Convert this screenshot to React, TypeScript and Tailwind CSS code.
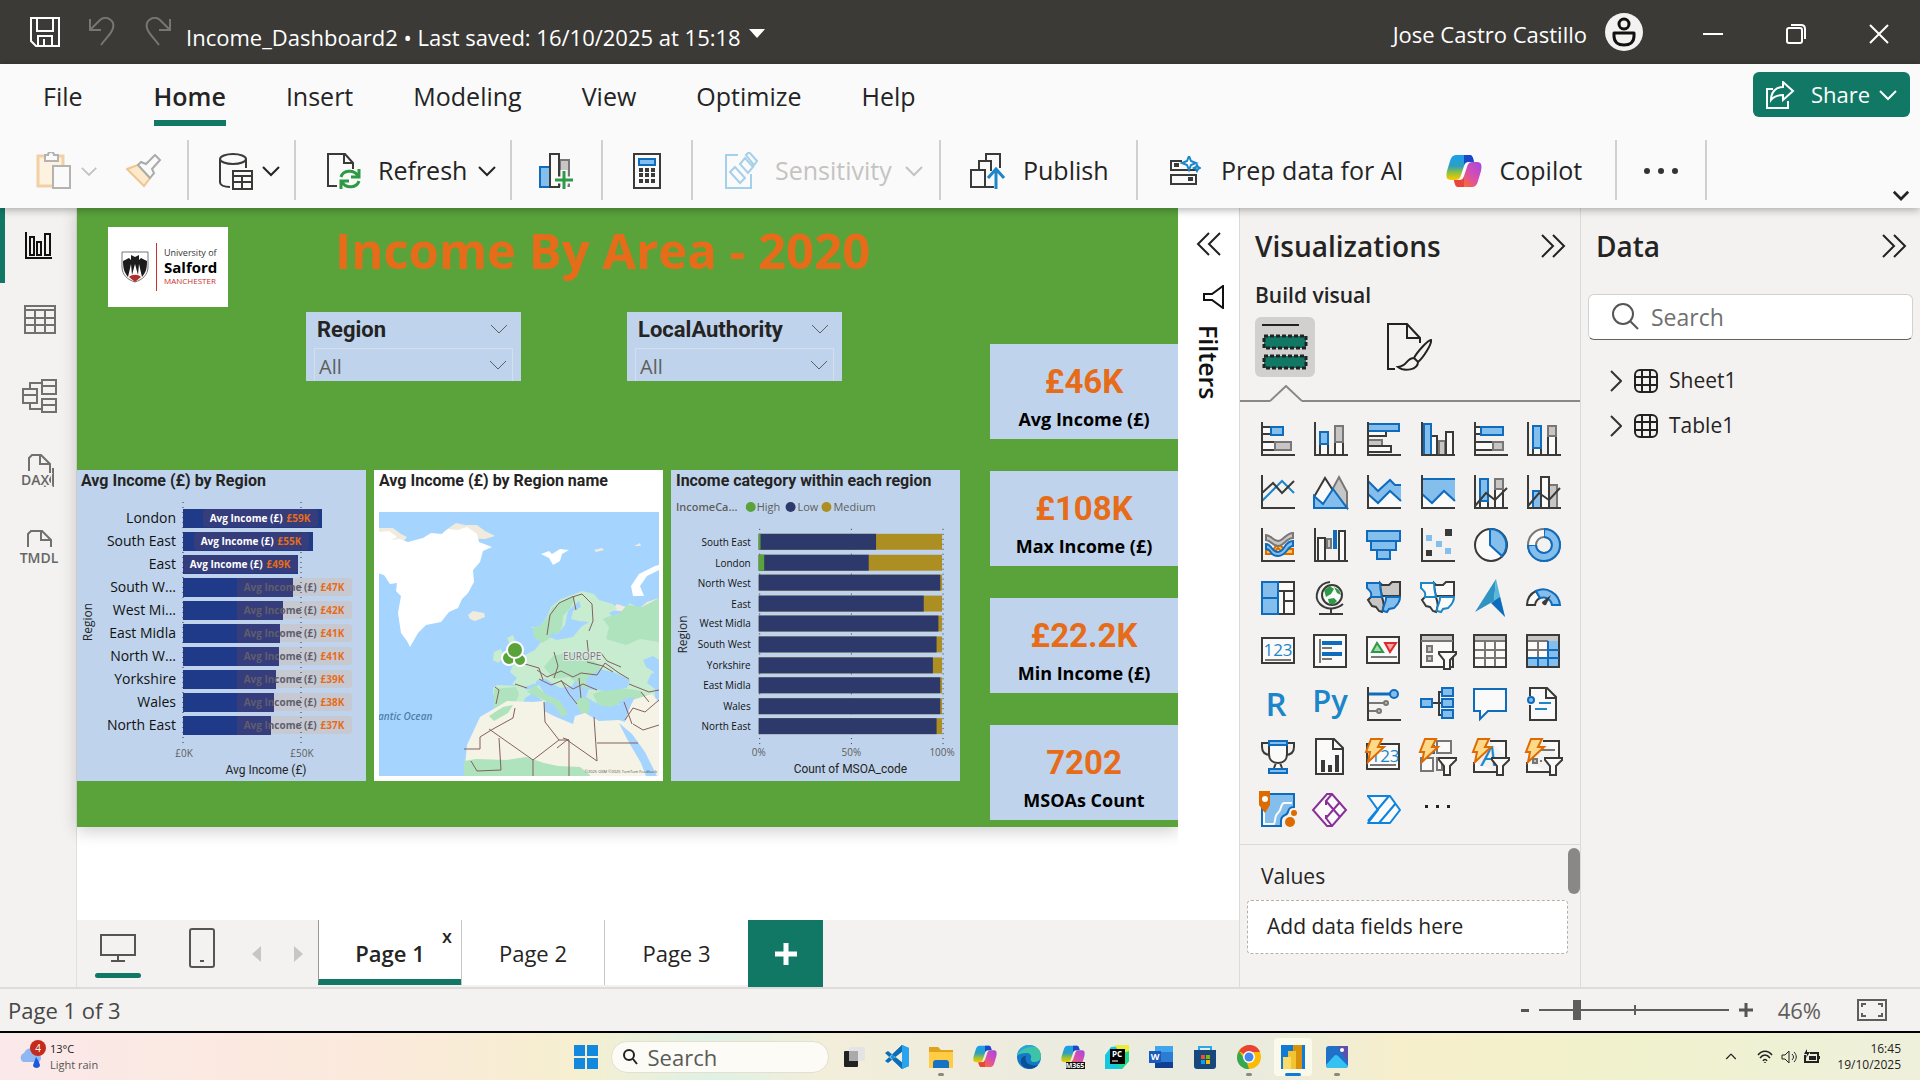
import React from "react";

const B = "#83beec";
const BS = "#0f6cbd";
const D = "#3a3a38";
const G = "#c8c6c4";
const GS = "#797775";
const W = "#fafafa";

type BoxProps = { x: number; y: number; w: number; h: number; f: string; s: string };
const Box = ({ x, y, w, h, f, s }: BoxProps) => (
  <rect x={x} y={y} width={w} height={h} fill={f} stroke={s} strokeWidth="2" />
);
const Axis = () => <path d="M1 0V33H34" fill="none" stroke={D} strokeWidth="2" />;
const Funnel = () => (
  <path d="M18 18h17v2l-6 6v9h-6v-9l-5-6z" fill={W} stroke={D} strokeWidth="2" />
);
const Bolt = () => (
  <path d="M4 -1h11l-4 8h6L1 22l2-10h-4z" fill="#ffd98a" stroke="#dd6b00" strokeWidth="2" />
);
const Line = ({ d, c = D, w = 2, f = "none" }: { d: string; c?: string; w?: number; f?: string }) => (
  <path d={d} fill={f} stroke={c} strokeWidth={w} />
);
const US_A = "M0 2h13c0 7 1 10 2 14H4c1-5-1-6-4-9z";
const US_B = "M13 2l2 2h7l3-3h8v14H15c-1-4-2-7-2-13z";
const US_C = "M4 16h11c1 5 3 6 1 12l-1 3-3-1-3-4-4-1-4-6z";
const US_D = "M19 16h14c0 6-3 8-6 11l-5 1-2 3-4-1c-1-5 4-8 3-14z";

const visuals: { name: string; art: React.ReactNode }[] = [
  { name: "Stacked bar chart", art: <><Box x={1} y={5} w={9} h={7} f={W} s={D} /><Box x={1} y={20} w={13} h={8} f={W} s={D} /><Box x={14} y={20} w={16} h={8} f={G} s={GS} /><Box x={10} y={5} w={12} h={8} f={B} s={BS} /><Axis /></> },
  { name: "Stacked column chart", art: <><Box x={6} y={22} w={8} h={11} f={W} s={D} /><Box x={21} y={20} w={8} h={13} f={W} s={D} /><Box x={21} y={4} w={8} h={16} f={G} s={GS} /><Box x={6} y={10} w={8} h={12} f={B} s={BS} /><Axis /></> },
  { name: "Clustered bar chart", art: <><Box x={1} y={9} w={18} h={5} f={W} s={D} /><Box x={1} y={18} w={14} h={6} f={G} s={GS} /><Box x={1} y={24} w={23} h={6} f={W} s={D} /><Box x={1} y={2} w={31} h={7} f={B} s={BS} /><Axis /></> },
  { name: "Clustered column chart", art: <><Box x={10} y={14} w={6} h={19} f={W} s={D} /><Box x={18} y={19} w={6} h={14} f={G} s={GS} /><Box x={25} y={10} w={7} h={23} f={W} s={D} /><Box x={3} y={2} w={7} h={31} f={B} s={BS} /><Axis /></> },
  { name: "100% stacked bar chart", art: <><Box x={1} y={5} w={6} h={7} f={W} s={D} /><Box x={1} y={20} w={18} h={8} f={W} s={D} /><Box x={19} y={20} w={10} h={8} f={G} s={GS} /><Box x={7} y={5} w={22} h={8} f={B} s={BS} /><Axis /></> },
  { name: "100% stacked column chart", art: <><Box x={6} y={26} w={8} h={7} f={W} s={D} /><Box x={21} y={14} w={8} h={19} f={W} s={D} /><Box x={21} y={4} w={8} h={10} f={G} s={GS} /><Box x={6} y={4} w={8} h={22} f={B} s={BS} /><Axis /></> },
  { name: "Line chart", art: <><Line d="M1 26L21 6l12 12" c="#1b86c9" /><Line d="M1 18L12 8l9 10L33 6" /><Axis /></> },
  { name: "Area chart", art: <><Line d="M17 17l8-15 8 15v16z" c={GS} f={G} /><Line d="M0 22L11 3l9 14-9 14z" f={W} /><Line d="M0 21l9 8 10-15 14 19H0z" c={BS} f={B} /></> },
  { name: "Stacked area chart", art: <><path d="M1 19l10 9 12-12 11 10v7H1z" fill={W} /><path d="M1 6l10 10L23 5l5 5h6v16L23 16 11 28 1 19z" fill={B} /><Line d="M1 6l10 10L23 5l5 5h6M1 19l10 9 12-12 11 10" c={BS} /><Axis /></> },
  { name: "100% stacked area chart", art: <><path d="M1 19l10 9 12-12 11 10v7H1z" fill={W} /><path d="M1 4h33v22L23 16 11 28 1 19z" fill={B} /><Line d="M1 4h33M1 19l10 9 12-12 11 10" c={BS} /><Axis /></> },
  { name: "Line and stacked column chart", art: <><Box x={6} y={26} w={8} h={7} f={W} s={D} /><Box x={21} y={14} w={8} h={19} f={W} s={D} /><Box x={21} y={4} w={8} h={10} f={G} s={GS} /><Box x={6} y={4} w={8} h={22} f={B} s={BS} /><Line d="M1 31l11-13 9 7 12-12" /><Axis /></> },
  { name: "Line and clustered column chart", art: <><Box x={6} y={16} w={8} h={17} f={B} s={BS} /><Box x={22} y={10} w={8} h={23} f={G} s={GS} /><Box x={14} y={2} w={8} h={31} f={W} s={D} /><Line d="M1 31l11-13 10 7 11-12" /><Axis /></> },
  { name: "Ribbon chart", art: <><path d="M5 22h7l5-7 6 6 9 0v5h-9l-6-6-5 6H5z" fill="#ffc55c" stroke="#dd6b00" strokeWidth="2" /><path d="M5 7c5 0 7 6 12 6s8-8 15-8v5c-7 0-9 8-15 8S10 12 5 12z" fill={G} stroke={GS} strokeWidth="2" /><path d="M5 16c6 0 5 8 12 8s6-11 15-11v5c-6 0-6 10-15 10S11 21 5 21z" fill={B} stroke={BS} strokeWidth="2" /><Axis /></> },
  { name: "Waterfall chart", art: <><Box x={4} y={10} w={7} h={23} f={W} s={D} /><Box x={13} y={11} w={4} h={9} f={G} s={GS} /><Box x={25} y={3} w={6} h={30} f={W} s={D} /><rect x="19" y="2" width="4" height="19" fill={BS} /><Axis /></> },
  { name: "Funnel", art: <><Box x={0} y={3} w={33} h={10} f={B} s={BS} /><Box x={4} y={13} w={25} h={9} f={B} s={BS} /><Box x={10} y={22} w={13} h={9} f={B} s={BS} /></> },
  { name: "Scatter chart", art: <><rect x="24" y="1" width="7" height="7" fill={D} /><rect x="5" y="7" width="6" height="6" fill={B} /><rect x="15" y="13" width="6" height="6" fill={B} /><rect x="5" y="22" width="6" height="6" fill={D} /><rect x="24" y="20" width="6" height="6" fill={B} /><Axis /></> },
  { name: "Pie chart", art: <><circle cx="17" cy="17" r="16" fill={W} stroke={D} strokeWidth="2" /><Line d="M16 1a16 16 0 0 1 12 27L16 17z" c={BS} f={B} /></> },
  { name: "Donut chart", art: <><circle cx="17" cy="17" r="12" fill="none" stroke={GS} strokeWidth="10" /><circle cx="17" cy="17" r="12" fill="none" stroke={W} strokeWidth="6" /><path d="M17 5a12 12 0 1 1-12 12" fill="none" stroke={BS} strokeWidth="10" /><path d="M18 5a12 12 0 1 1-13 13" fill="none" stroke={B} strokeWidth="6" /></> },
  { name: "Treemap", art: <><Box x={17} y={1} w={16} h={32} f={W} s={D} /><Line d="M17 10h16M23 10v23M23 20h10" /><Box x={1} y={1} w={16} h={32} f={B} s={BS} /><Line d="M1 17h16" c={BS} /></> },
  { name: "Map", art: <><path d="M16 1C4 2-1 16 6 23c7 7 17 5 23 0M5 33h24M17 28v5" fill="none" stroke={D} strokeWidth="2" /><circle cx="18" cy="14" r="10" fill={W} stroke={D} strokeWidth="2" /><path d="M10 9l6-4 4 3-3 5-5 3zM20 6l5 3 2 5-4-2zM14 18l6-1 3 3-4 4-4-2z" fill="#2f9a45" /></> },
  { name: "Filled map", art: <><Line d={US_C} f={G} /><Line d={US_B} f={G} /><Line d={US_A} c={BS} f={B} /><Line d={US_D} c={BS} f={B} /></> },
  { name: "Shape map", art: <><Line d={US_C} f={W} /><Line d={US_B} f={W} /><Line d={US_A} c="#1b86c9" f={W} /><Line d={US_D} c="#1b86c9" f={W} /></> },
  { name: "Azure map", art: <><path d="M22-2L1 31l19-11z" fill="#2f93c4" /><path d="M22-2l9 38-11-16z" fill="#57b7dc" /><path d="M20 20l-3 2 14 14-5-20z" fill="#0f6cbd" /></> },
  { name: "Gauge", art: <><path d="M0 24a16 16 0 0 1 9-14l4 7a9 9 0 0 0-5 7z" fill={W} stroke={D} strokeWidth="2" /><path d="M9 10a17 17 0 0 1 24 14h-8a9 9 0 0 0-12-7z" fill={B} stroke={BS} strokeWidth="2" /><path d="M24 14l-5 10a3 3 0 0 1-4-3z" fill={D} /></> },
  { name: "Card", art: <><Box x={1} y={4} w={32} h={25} f={W} s={D} /><text x="17" y="22" textAnchor="middle" fontSize="17" fill="#1b86c9">123</text><Line d="M4 26h26" c={GS} /></> },
  { name: "Multi-row card", art: <><Box x={0} y={1} w={32} h={32} f={W} s={D} /><Line d="M6 5v24M8 14h10M8 25h10" c={GS} /><Line d="M8 9h20M8 20h20" c="#0f6cbd" w={4} /></> },
  { name: "KPI", art: <><Box x={0} y={3} w={32} h={26} f={W} s={D} /><Line d="M5 18l5-9 6 9z" c="#2f9a45" f="#9fdcae" /><Line d="M18 9h11l-6 9z" c="#d92c2c" f="#ffa3a3" /><Line d="M4 23h26" c={GS} /></> },
  { name: "Slicer", art: <><Box x={0} y={1} w={32} h={32} f={W} s={D} /><rect x="1" y="2" width="30" height="5" fill={G} /><Line d="M0 7h32" c={GS} /><Box x={6} y={12} w={5} h={6} f={G} s={GS} /><Box x={6} y={22} w={5} h={5} f={G} s={GS} /><Funnel /></> },
  { name: "Table", art: <><Box x={0} y={1} w={32} h={32} f={W} s={D} /><rect x="1" y="2" width="30" height="5" fill={G} /><Line d="M1 7h30M1 16h30M1 24h30M11 7v25M21 7v25" c={GS} /></> },
  { name: "Matrix", art: <><Box x={0} y={1} w={32} h={32} f={W} s={D} /><rect x="1" y="2" width="30" height="5" fill={G} /><path d="M21 7h10v25H1v-8h20z" fill={B} /><Line d="M1 7h20M1 16h20M11 7v17" c={GS} /><Line d="M21 7v25M1 24h31M21 16h11M11 24v8" c={BS} /></> },
  { name: "R script visual", art: <text x="15" y="29" textAnchor="middle" fontSize="33" fontWeight="600" fill="#1b86c9">R</text> },
  { name: "Python visual", art: <text x="16" y="25" textAnchor="middle" fontSize="31" fontWeight="600" fill="#1b86c9">Py</text> },
  { name: "Key influencers", art: <><Line d="M1 7h24" c="#0f6cbd" w={3} /><Line d="M1 16h17M1 24h10" c={GS} /><circle cx="27" cy="7" r="4" fill={B} stroke={BS} strokeWidth="2" /><circle cx="19" cy="16" r="2" fill={G} stroke={GS} strokeWidth="2" /><circle cx="12" cy="24" r="2" fill={G} stroke={GS} strokeWidth="2" /><Axis /></> },
  { name: "Decomposition tree", art: <><Line d="M11 16h10M22 5h-4v23h4" /><Box x={0} y={12} w={11} h={8} f={B} s={BS} /><Box x={21} y={1} w={11} h={8} f={B} s={BS} /><Box x={21} y={12} w={11} h={8} f={B} s={BS} /><Box x={21} y={23} w={11} h={8} f={B} s={BS} /></> },
  { name: "Q&A", art: <Line d="M0 2h32v22H14l-8 8v-8H0z" c={BS} f={W} /> },
  { name: "Narrative", art: <><Line d="M3 9V1h17l9 9v23H3V18" f={W} /><Line d="M19 1v10h10" /><circle cx="4" cy="13" r="3" fill={B} stroke={BS} strokeWidth="2" /><Line d="M12 16h12M8 22h12" c="#1b86c9" /></> },
  { name: "Metrics", art: <><path d="M8 3H1v4c0 5 3 8 9 8M26 3h7v4c0 5-3 8-9 8" fill="none" stroke={D} strokeWidth="2" /><path d="M8 2h18v12c0 6-4 9-9 9s-9-3-9-9zM13 28l2-5h4l2 5" fill={W} stroke={D} strokeWidth="2" /><Box x={8} y={1} w={18} h={4} f={B} s={BS} /><Box x={8} y={29} w={18} h={4} f={B} s={BS} /></> },
  { name: "Paginated report", art: <><Line d="M2-1h18l9 9v26H2z" f={W} /><Line d="M19-1v10h10" /><path d="M7 20h4v12H7zM14 25h4v7h-4zM21 15h4v17h-4z" fill={D} /></> },
  { name: "Card (new)", art: <><Box x={0} y={4} w={32} h={25} f={W} s={D} /><text x="18" y="22" textAnchor="middle" fontSize="17" fill="#1b86c9">123</text><Line d="M3 25h26" c={GS} /><Bolt /></> },
  { name: "Button slicer", art: <><Box x={0} y={18} w={12} h={13} f={W} s={GS} /><Box x={16} y={1} w={14} h={12} f={W} s={GS} /><Line d="M16 18h5v12h-5z" c={GS} f={W} /><rect x="6" y="5" width="8" height="9" fill="#0f6cbd" /><Funnel /><Bolt /></> },
  { name: "Text slicer", art: <><Line d="M16 1h16v16M0 22v10h22" f={W} /><text x="15" y="26" textAnchor="middle" fontSize="27" fontStyle="italic" fill="#1b86c9">A</text><Funnel /><Bolt /></> },
  { name: "List slicer", art: <><Line d="M16 1h16v16M0 22v10h22" f={W} /><Box x={6} y={19} w={4} h={4} f={G} s={GS} /><Line d="M14 10h14M13 21h2" c={GS} /><Funnel /><Bolt /></> },
  { name: "ArcGIS map", art: <><path d="M1 1h32v13c-8 0-4 7-9 8-5 2-4 6-4 11H1z" fill={B} stroke={BS} strokeWidth="2" /><path d="M3 20h10V9h7" fill={B} /><path d="M3 18v13h10c2-4 0-8 4-11s2-9 6-10h8" fill="none" stroke={W} strokeWidth="2" /><path d="M-2-2H9v14L4 20-2 12z" fill="#dd6b00" /><circle cx="4" cy="6" r="3" fill={W} /><circle cx="29" cy="29" r="5" fill="#dd6b00" /><circle cx="33" cy="20" r="3" fill="#dd6b00" /></> },
  { name: "Power Apps", art: <><path d="M13 1h5l14 16-14 16h-5L-1 17z" fill={W} stroke="#8a2f99" strokeWidth="2" /><path d="M18 1l-6 7 14 16M26 9L12 25l6 8M12 8v4M12 22v4" fill="none" stroke="#8a2f99" strokeWidth="2" /></> },
  { name: "Power Automate", art: <path d="M1 3h22l10 14-10 13H1l10-13zM22 3L1 28M29 10L12 30M7 3L0 3" fill={W} stroke="#0a84e0" strokeWidth="2" strokeLinejoin="round" /> },
  { name: "More visuals", art: <path d="M4 12h3v3H4zM15 12h3v3h-3zM26 12h3v3h-3z" fill="#222" /> },
];

const Chevron = ({ className = "", w = 2 }: { className?: string; w?: number }) => (
  <svg viewBox="0 0 20 12" className={className} fill="none" stroke="currentColor" strokeWidth={w} aria-hidden="true">
    <path d="M2 2l8 8 8-8" />
  </svg>
);
const DoubleChevron = ({ left = false }: { left?: boolean }) => (
  <svg viewBox="0 0 26 26" className="size-[26px]" fill="none" stroke="#222" strokeWidth="2" aria-hidden="true">
    <path d={left ? "M13 2L2 13l11 11M24 2L13 13l11 11" : "M2 2l11 11L2 24M13 2l11 11-11 11"} />
  </svg>
);

const CopilotMark = ({ className }: { className: string }) => (
  <svg viewBox="0 0 36 34" className={className} aria-hidden="true">
    <defs>
      <linearGradient id="cpA" x1="0" y1="0" x2="0" y2="1">
        <stop offset="0" stopColor="#1aa0f0" /><stop offset=".45" stopColor="#2f9ec0" /><stop offset=".7" stopColor="#8fc23c" /><stop offset="1" stopColor="#ffc800" />
      </linearGradient>
      <linearGradient id="cpB" x1="1" y1="0" x2="0" y2="1">
        <stop offset="0" stopColor="#a348e0" /><stop offset=".45" stopColor="#d94fae" /><stop offset=".75" stopColor="#f5654a" /><stop offset="1" stopColor="#ff9d3c" />
      </linearGradient>
    </defs>
    <path d="M18 1h6c2 0 3 2 4 7h-6c-2 0-3 1-4 4l-3 9c-1 4-3 5-6 5H5c-5 0-5-4-4-9l3-10c1-4 3-6 6-6z" fill="url(#cpA)" />
    <path d="M18 1h6c2 0 3 2 4 7h-6c-2 0-3 1-4 3z" fill="#1a48c8" />
    <path d="M18 33h-6c-2 0-3-2-4-7h6c2 0 3-1 4-4l3-9c1-4 3-5 6-5h4c5 0 5 4 4 9l-3 10c-1 4-3 6-6 6z" fill="url(#cpB)" />
    <path d="M18 33h-6c-2 0-3-2-4-7h6c2 0 3-1 4-3z" fill="#e8453c" />
  </svg>
);

const tabs = ["File", "Home", "Insert", "Modeling", "View", "Optimize", "Help"];

const TitleBar = () => (
  <header className="flex h-16 items-center bg-[#3b3a37] text-white">
    <button aria-label="Save" className="ml-[30px]">
      <svg viewBox="0 0 30 30" className="size-[30px]" fill="none" stroke="#fff" strokeWidth="2"><path d="M1 1h28v28H6l-5-5zM7 1v13h16V1M8 29V19h14v10M14 22v7" /></svg>
    </button>
    <button aria-label="Undo" className="ml-7">
      <svg viewBox="0 0 28 30" className="h-[30px] w-7" fill="none" stroke="#777673" strokeWidth="2"><path d="M2 2v11h11M2 13L12 3c6-5 15 0 13 8-1 5-6 9-12 17" /></svg>
    </button>
    <button aria-label="Redo" className="ml-7">
      <svg viewBox="0 0 28 30" className="h-[30px] w-7" fill="none" stroke="#777673" strokeWidth="2"><path d="M26 2v11H15M26 13L16 3C10-2 1 3 3 11c1 5 6 9 12 17" /></svg>
    </button>
    <button className="ml-[14px] flex items-center pt-2.5 text-[22px] whitespace-nowrap">
      Income_Dashboard2 • Last saved: 16/10/2025 at 15:18
      <svg viewBox="0 0 16 9" className="mb-2 ml-2 h-[9px] w-4" aria-hidden="true"><path d="M0 0h16l-8 9z" fill="#fff" /></svg>
    </button>
    <div className="ml-auto flex items-center">
      <span className="pt-1 text-[22px]">Jose Castro Castillo</span>
      <svg viewBox="0 0 38 38" className="ml-[18px] size-[38px]" aria-hidden="true">
        <circle cx="19" cy="19" r="19" fill="#f3f2f1" />
        <g fill="none" stroke="#111" strokeWidth="3"><circle cx="19" cy="11" r="5" /><path d="M9 20h20v3c0 6-4 9-10 9s-10-3-10-9z" strokeLinejoin="round" /></g>
      </svg>
      <button aria-label="Minimize" className="ml-[60px]"><svg viewBox="0 0 20 20" className="size-5" stroke="#fff" strokeWidth="2"><path d="M0 12h20" /></svg></button>
      <button aria-label="Restore" className="mt-1 ml-[63px]"><svg viewBox="0 0 20 20" className="size-5" fill="none" stroke="#fff" strokeWidth="2"><rect x="1" y="4" width="15" height="15" rx="2" /><path d="M5 1h10q4 0 4 4v10" /></svg></button>
      <button aria-label="Close" className="mt-1 mr-[31px] ml-[63px]"><svg viewBox="0 0 20 20" className="size-5" stroke="#fff" strokeWidth="2"><path d="M1 1l18 18M19 1L1 19" /></svg></button>
    </div>
  </header>
);

const Group = ({ className, children }: { className: string; children: React.ReactNode }) => (
  <div className={"flex h-[60px] shrink-0 items-center border-r-2 border-[#d2d0ce] pt-0.5 " + className}>{children}</div>
);

const Ribbon = () => (
  <div className="relative z-10 bg-[#fafafa] text-[#242424] shadow-[0_2px_8px_rgba(0,0,0,0.3)]">
    <div className="flex h-[76px] items-start pr-2.5 pl-[43px]">
      <nav className="flex gap-[60px] pt-3 text-[25px]">
        {tabs.map((t) => (
          <button key={t} className={"border-b-6 pt-[2px] pb-1 first:mr-[11px] " + (t === "Home" ? "border-[#117865] font-semibold" : "border-transparent")}>{t}</button>
        ))}
      </nav>
      <button className="mt-2 ml-auto flex h-[45px] w-[157px] items-center gap-4 rounded-md bg-[#117865] px-3 text-[22px] text-white">
        <svg viewBox="0 0 30 28" className="h-7 w-[30px] shrink-0" fill="none" stroke="#fff" strokeWidth="2" aria-hidden="true"><path d="M8 8H2v19h21v-7M18 1l10 9-10 9v-5c-6 0-9 1-12 5 0-8 5-13 12-13z" /></svg>
        <span>Share</span>
        <Chevron className="-ml-2 w-5 shrink-0" />
      </button>
    </div>
    <div className="flex h-[68px] items-start text-[25px]">
      <Group className="w-[189px] pl-9">
        <button aria-label="Paste" className="flex items-center gap-2 text-[#c5c3c1]">
          <svg viewBox="0 0 36 38" className="h-[38px] w-9" strokeWidth="2"><path d="M2 4h25v30H2z" fill="#fdf1df" stroke="#f3cfa6" strokeWidth="3" /><path d="M9 3h3c0-4 6-4 6 0h4v6H9z" fill={W} stroke="#b5b3b1" /><path d="M17 14h17v22H17z" fill={W} stroke="#b5b3b1" /></svg>
          <Chevron className="w-[18px]" />
        </button>
        <button aria-label="Format painter" className="ml-7">
          <svg viewBox="0 0 36 34" className="h-[34px] w-9" strokeWidth="2"><path d="M1 15l11-4 12 13-6 8z" fill="#fdeacb" stroke="#f0c592" /><path d="M12 11l3-3 5 2 9-9 5 5-8 9 2 4-4 5z" fill={W} stroke="#aaa" /></svg>
        </button>
      </Group>
      <Group className="w-[107px] pl-[30px]">
        <button aria-label="Get data" className="flex items-center gap-2">
          <svg viewBox="0 0 34 37" className="h-[37px] w-[34px]" fill="none" stroke={D} strokeWidth="2"><ellipse cx="14" cy="6" rx="13" ry="5" /><path d="M1 6v23c0 3 4 5 10 5M27 6v9M14 18h19v18H14zM14 23h19M23 23v13M14 29h19" /></svg>
          <Chevron className="w-5" />
        </button>
      </Group>
      <Group className="w-[216px] pl-[30px]">
        <button className="flex items-center">
          <svg viewBox="0 0 36 38" className="mr-4 h-[38px] w-9" fill="none" stroke={D} strokeWidth="2" aria-hidden="true"><path d="M11 34H2V2h17l8 9v6M18 2v9h9" /><g stroke="#2f9a45" strokeWidth="3"><path d="M15 25c2-7 13-8 17-1M33 17v8h-8M33 29c-2 7-13 8-17 1M15 37v-8h8" /></g></svg>
          Refresh
          <Chevron className="ml-2.5 w-5" />
        </button>
      </Group>
      <Group className="w-[91px] justify-center">
        <button aria-label="New visual">
          <svg viewBox="0 0 36 38" className="h-[38px] w-9" strokeWidth="2"><path d="M1 15h10v20H1z" fill={B} stroke="#0f6cbd" /><path d="M21 8h9v26h-9z" fill={G} stroke={GS} /><path d="M11 2h9v33h-9z" fill={W} stroke={D} /><path d="M15 28h20M25 18v20" stroke={W} strokeWidth="7" /><path d="M16 28h18M25 19v18" stroke="#2f9a45" strokeWidth="3" /></svg>
        </button>
      </Group>
      <Group className="w-[90px] justify-center">
        <button aria-label="New measure">
          <svg viewBox="0 0 28 36" className="h-9 w-7"><path d="M1 1h26v34H1z" fill={W} stroke={D} strokeWidth="2" /><path d="M6 6h16v6H6z" fill={B} stroke="#0f6cbd" strokeWidth="2" /><path d="M6 15h4v4H6zM12 15h4v4h-4zM18 15h4v4h-4zM6 20h4v4H6zM12 20h4v4h-4zM18 20h4v4h-4zM6 26h4v4H6zM12 26h4v4h-4zM18 26h4v4h-4z" fill={D} /></svg>
        </button>
      </Group>
      <Group className="w-[248px] pl-[31px]">
        <button disabled className="flex items-center text-[#c5c3c1]">
          <svg viewBox="0 0 34 38" className="mr-[17px] h-[38px] w-[34px]" fill="none" stroke="#a5d0ea" strokeWidth="2" aria-hidden="true"><path d="M14 3H2v33h25V22M6 20l5-5 10 11-5 5zM16 12l5-6 8 9-5 6zM22 3l3-3 8 9-3 4z" /></svg>
          Sensitivity
          <Chevron className="ml-3 w-5" />
        </button>
      </Group>
      <Group className="w-[197px] pl-[29px]">
        <button className="flex items-center">
          <svg viewBox="0 0 36 38" className="mr-[17px] h-[38px] w-9" fill="none" stroke={D} strokeWidth="2" aria-hidden="true"><path d="M1 18h14v17H1zM9 18V9h12v10M16 9V2h14v14M15 35h9" /><path d="M26 37V17M18 26l8-9 8 9" stroke="#1b86c9" strokeWidth="3" /></svg>
          Publish
        </button>
      </Group>
      <Group className="w-[479px] pl-[31px]">
        <button className="flex items-center">
          <svg viewBox="0 0 32 30" className="mr-5 h-[30px] w-8" fill="none" stroke={D} strokeWidth="2" aria-hidden="true"><path d="M13 5H2v9h25M2 19h25v9H2zM27 14v-3" /><path d="M5 7h5v4H5zM19 21h5v4h-5z" fill={D} stroke="none" /><path d="M20 0l2 5 5 2-5 2-2 5-2-5-5-2 5-2zM28 9l1 2 2 1-2 1-1 2-1-2-2-1 2-1z" fill={W} stroke="#1b86c9" /></svg>
          Prep data for AI
        </button>
        <button className="ml-[42px] flex items-center">
          <CopilotMark className="mr-[18px] w-9" />
          Copilot
        </button>
      </Group>
      <Group className="w-[90px] justify-center">
        <button aria-label="More options"><svg viewBox="0 0 34 6" className="h-[6px] w-[34px]"><g fill="#333"><circle cx="3" cy="3" r="3" /><circle cx="17" cy="3" r="3" /><circle cx="31" cy="3" r="3" /></g></svg></button>
      </Group>
      <button aria-label="Collapse ribbon" className="mt-[50px] mr-2.5 ml-auto"><Chevron className="w-[18px]" w={3} /></button>
    </div>
  </div>
);

const railItems: { name: string; art: React.ReactNode }[] = [
  { name: "Report view", art: <path d="M4 4v26h26M8 9h4v18H8zM15 14h4v13h-4zM23 6h5v21h-5z" stroke="#111" /> },
  { name: "Table view", art: <path d="M3 3h30v27H3zM3 7h30M3 15h30M3 22h30M13 7v23M23 7v23" /> },
  { name: "Model view", art: <path d="M1 11h14v14H1zM1 17h14M20 2h14v14H20zM20 8h14M20 21h14v13H20zM20 27h14M8 11V5h12M8 25v6h12" /> },
  { name: "DAX query view", art: <><path d="M7 18V5l3-3h9l9 9v18h-4M18 2v9h9M31 15v18H18" /><text x="13" y="32" textAnchor="middle" fontSize="14" fontWeight="600" fill="#666" stroke="#f3f2f1" strokeWidth="4" paintOrder="stroke">DAX</text></> },
  { name: "TMDL view", art: <><path d="M6 19V6l3-3h11l9 9v7M19 3v9h10" /><text x="17" y="35" textAnchor="middle" fontSize="14" fontWeight="600" fill="#666" stroke="none">TMDL</text></> },
];

const Rail = () => (
  <nav className="flex w-[77px] shrink-0 flex-col border-r border-[#e1dfdd] bg-[#f3f2f1]">
    {railItems.map((r, i) => (
      <button key={r.name} aria-label={r.name} className={"flex h-[75px] w-full items-center justify-center border-l-5 pr-[3px] " + (i === 0 ? "border-[#117865]" : "border-transparent")}>
        <svg viewBox="0 0 35 35" className="size-[35px] overflow-visible" fill="none" stroke="#72706e" strokeWidth="2">{r.art}</svg>
      </button>
    ))}
  </nav>
);

const Slicer = ({ label, id }: { label: string; id: string }) => (
  <div className="flex h-[69px] w-[215px] flex-col bg-[#bfd4ec] px-2 text-[#252423]">
    <div className="flex h-8 items-center justify-between pt-0.5 pr-1 pl-[3px]">
      <label htmlFor={id} className="font-[Roboto] text-[22px] font-bold">{label}</label>
      <Chevron className="w-5 text-[#605e5c]" w={1} />
    </div>
    <div className="relative mt-1 h-[33px] border border-b-0 border-[#d5dfea]">
      <select id={id} className="size-full appearance-none bg-transparent pt-1 pl-1 text-xl text-[#605e5c]"><option>All</option></select>
      <Chevron className="pointer-events-none absolute top-2.5 right-1 w-5 text-[#605e5c]" w={1} />
    </div>
  </div>
);

const regionIncome: [string, number, string][] = [
  ["London", 139, "£59K"], ["South East", 130, "£55K"], ["East", 115, "£49K"], ["South W...", 110, "£47K"], ["West Mi...", 100, "£42K"],
  ["East Midla", 97, "£41K"], ["North W...", 96, "£41K"], ["Yorkshire", 93, "£39K"], ["Wales", 91, "£38K"], ["North East", 88, "£37K"],
];

const IncomeChart = () => (
  <svg viewBox="0 0 289 311" className="w-full bg-[#bfd4ec]" role="img" aria-label="Avg Income by Region">
    <text x="4" y="16" fontFamily="Roboto" fontWeight="700" fontSize="16" fill="#252423">Avg Income (£) by Region</text>
    <text transform="translate(15 152) rotate(-90)" textAnchor="middle" fontSize="12" fill="#252423">Region</text>
    {regionIncome.map(([name, w, v], i) => {
      const y = 39 + i * 23;
      const inside = i < 3;
      const lx = inside ? 106 + w - 119 + (i === 2 ? 4 : 0) : 160;
      return (
        <g key={name}>
          <text x="99" y={y + 14} textAnchor="end" fontSize="14" fill="#111">{name}</text>
          <rect x="106" y={y} width={w} height="19" fill="#1f3a88" />
          <rect x={lx} y={y} width="115" height="18" rx="3" fill={inside ? "#353d7c" : "#c8c6cb"} fillOpacity={inside ? 1 : 0.8} />
          {!inside && <rect x="160" y={y} width={w - 54} height="19" fill="#353d7c" />}
          <text x={lx + 57} y={y + 13} textAnchor="middle" fontSize="10" fontWeight="700">
            <tspan fill={inside ? "#fff" : "#605e6c"}>Avg Income (£)</tspan><tspan dx="4" fill="#e66c1a">{v}</tspan>
          </text>
        </g>
      );
    })}
    <path d="M106 32V277M224 32V277" stroke="#333" strokeDasharray="1 4" />
    <g fill="#605e5c" fontSize="10" textAnchor="middle"><text x="107" y="287">£0K</text><text x="225" y="287">£50K</text></g>
    <text x="189" y="304" textAnchor="middle" fontSize="12" fontFamily="Roboto" fill="#252423">Avg Income (£)</text>
  </svg>
);

const MapVisual = () => (
  <div className="w-full bg-white">
    <h2 className="h-[42px] pt-[2px] pl-[5px] font-[Roboto] text-[16px] leading-[18px] font-bold text-[#252423]">Avg Income (£) by Region name</h2>
    <svg viewBox="0 0 280 264" className="mx-auto w-[280px]" role="img" aria-label="Map of Europe">
      <rect width="280" height="264" fill="#a5d5ff" />
      <path d="M0 16h14l8 6 6 3-4 5-24-2zM60 24l7-6 10-7 9 2 12 0 8 6 10 5-10 3-30-1zM89 60l-2 14-6 8-4-2 4-16z" fill="#f0ebdd" />
      <g fill="#fff">
        <path d="M0 20l10-1 8 6-6 3 9-1 8 3 15-4 8-5 11 1 6-5 10 1 9-3 10 7 2 8 13 5-9 4-3 11-7 8 1 12-6 11-6 6-4 9-9 4-8 10-15 3-8 8-8 14-3-6-6-8-3-20 3-17-5-5 1-8-7 1-6-9-7-2z" />
        <path d="M162 42l8-3 3 3 8-5 9 1-7 4-2 7-7 4-4-7zM254 84l-2-10 8-12 16-8 4-1v5l-12 6-7 10 4 10z" />
      </g>
      <path d="M215 38l8-2 2 2-8 2zM255 34l6-3 1 3zM232 98l6-6 12 4 8 2 10-8 12-4v14h-30z" fill="#f0ebdd" />
      <path d="M89 103l5-4 11 2 1 4-10 4-5-2z" fill="#f0ebdd" />
      <g fill="#c8ecd0">
        <path d="M153 116l8-2 7-9 4-10 10-8 11-4 10-4 12 3 5 6 14 4 4 5-8 4 4 4 12-6 4-8 10 5 20-9v72l-8 3-4 9 8 6v18h-28l-20-6-11 2-10-6 4-12 12-8-12-6-10 1-8 14-12 2-14-9-12 2-7-10-4-2-5-6 9-9 8-4 6-8-2-10 8-4 2 9 8 3 16-3 8-10 8-5-10-1-8-2 2-8 8-4-2-6-11 10-3 14-4 5-8 2-5-11-2 7-9 3-5-5z" />
        <path d="M114 176l4-3 21 1 10 4 11-5 5 8 4 6-3 4-12-10-8 5-5 12-7 9-8 3-11-3 1-20-2-6z" />
        <path d="M134 153l12 2 8-4 6 6-3 14-14 5-10-4 5-6-7-6z" />
        <path d="M128 126l6-3 2 6 4 6 6 11-3 4-12 2 3-5-4-5 2-8zM115 140l7-3 3 8-6 6-5-3z" />
      </g>
      <g fill="#aee3bd">
        <path d="M154 116l7-2 8-9 4-9 10-7 14-5-5 11-8 9-1 11-5 8-5-3-2 6-8 5-8-6z" />
        <path d="M231 104l9-2 8-9 15 2 17-9v44l-19-3-14 6-20-6 3-12-6-8z" />
        <path d="M115 177l22-2 3 7-4 10-2 12-14 2-5-5z" />
        <path d="M174 144l16-4 17 4 12 8 9 12-8 12-14 1-16-12-15 2-10-12z" />
        <path d="M214 182l16-6 20 1 12 2 9 8-6 5-20-2-14 5-12-2z" />
      </g>
      <path d="M148 180l8-7 9 8 16 8 8 13-6 3-8-12-14-7zM196 190l7-6 8 6-2 12-5 2z" fill="#aee3bd" />
      <path d="M207 167l14-10 16 4 14 7-3 8-20 3-20-2zM264 148l10-4 6 4v28l-8-5 3-11-8-5z" fill="#a5d5ff" />
      <path d="M85 264l3-31 13-28 17-10 10-6 25 1 12-1 0 10 12 6 17 7 2-8 10-3 14 8 20-1 6 2 7-22 20-6 7 8v82z" fill="#f5f2e6" />
      <path d="M240 211l8 16 14 24 5 13h11l-12-24-13-18zM240 190l8-4 8-1-5 10-5 14z" fill="#a5d5ff" />
      <path d="M85 264v-15l12-2 30 1 20-3 18 6 14 3 22 1 10 8v1z" fill="#aee3bd" />
      <path d="M110 204l14-9 10-2-5 8-14 8z" fill="#aee3bd" />
      <g fill="none" stroke="#84605f" strokeWidth="1">
        <path d="M168 123l3-20 9-12 13-6 10-3 10 10 1 17-4 10M194 84l3 14M208 128l2 18M208 150l16 4 10 6M175 140l4 14-4 12M158 158l10 7 14-6 12 6 8-4 16 2 8-12 14 10 10 6M160 167l12 6 10-4 12 8 10-5 14 6M182 168l8 14 8 10M200 166l2 20M116 175l4 3-3 14M136 172l12 4M146 152l14 4 4 12M210 145l12-4 6 8 14 6" />
        <path d="M136 196l-2 10-20 11-13 8v12h-16M110 217l44 31 26-20-14-18-1-20M180 228h10v42M190 228l-6-2M215 205l3 44M218 231h41M218 249l-30-21-10 8M154 248v16M120 226l2 32-24 1-6-10M245 190l8 22M246 208l8-12 12 4 14-12M254 212l10 6 16-5M250 172l20 8 10-2M262 180l8 10" />
      </g>
      <g fill="#5aa33b" stroke="#fff" strokeWidth="2"><circle cx="130" cy="146" r="7" /><circle cx="141" cy="148" r="6" /><circle cx="136" cy="138" r="8" /></g>
      <text x="184" y="148" fontSize="10" fill="#76787c" stroke="#dfe9e3" strokeWidth="2" paintOrder="stroke">EUROPE</text>
      <text x="-1" y="208" fontSize="10" fontStyle="italic" fontWeight="600" fill="#4f7ea8">antic Ocean</text>
      <text x="278" y="261" textAnchor="end" fontSize="4" fill="#555">©2025 OSM ©2025 TomTom Feedback</text>
    </svg>
  </div>
);

const categories: [string, number, number][] = [
  ["South East", 1, 64], ["London", 3, 60], ["North West", 0, 99], ["East", 0, 90], ["West Midla", 0, 98],
  ["South West", 0, 97], ["Yorkshire", 0, 95], ["East Midla", 0, 99], ["Wales", 0, 99], ["North East", 0, 97],
];

const CategoryChart = () => (
  <svg viewBox="0 0 290 312" className="w-full bg-[#bfd4ec]" role="img" aria-label="Income category within each region">
    <text x="5" y="16" fontFamily="Roboto" fontWeight="700" fontSize="16" fill="#252423">Income category within each region</text>
    <g fontSize="11" fill="#605e5c">
      <text x="5" y="41" fontWeight="600">IncomeCa...</text>
      <circle cx="80" cy="37" r="5" fill="#5aa33b" /><text x="86" y="41">High</text>
      <circle cx="120" cy="37" r="5" fill="#2d386b" /><text x="127" y="41">Low</text>
      <circle cx="156" cy="37" r="5" fill="#ad8e22" /><text x="163" y="41">Medium</text>
    </g>
    <path d="M89 59V277M181 59V277M273 59V277" stroke="#333" strokeDasharray="1 4" />
    <text transform="translate(16 165) rotate(-90)" textAnchor="middle" fontSize="12" fill="#252423">Region</text>
    {categories.map(([name, hi, lo], i) => {
      const y = Math.round(64 + i * 20.6);
      const k = 1.84;
      return (
        <g key={name}>
          <text x="80" y={y + 12} textAnchor="end" fontSize="10" fill="#111">{name}</text>
          <rect x="88" y={y} width="184" height="16" fill="#ad8e22" />
          <rect x="88" y={y} width={lo * k} height="16" fill="#2d386b" />
          {hi > 0 && <rect x="88" y={y} width={hi * k} height="16" fill="#5aa33b" />}
        </g>
      );
    })}
    <g fill="#605e5c" fontSize="10" textAnchor="middle"><text x="88" y="287">0%</text><text x="181" y="287">50%</text><text x="272" y="287">100%</text></g>
    <text x="180" y="304" textAnchor="middle" fontSize="12" fontFamily="Roboto" fill="#252423">Count of MSOA_code</text>
  </svg>
);

const cards: [string, string][] = [["£46K", "Avg Income (£)"], ["£108K", "Max Income (£)"], ["£22.2K", "Min Income (£)"], ["7202", "MSOAs Count"]];

const Report = () => (
  <section className="flex bg-[#5aa33b] shadow-[0_4px_16px_rgba(0,0,0,0.2)]">
    <div className="min-w-0 flex-1 pb-[46px]">
      <div className="flex h-[104px] pt-[19px] pl-[31px]">
        <div className="flex h-20 w-[120px] shrink-0 items-center bg-white pl-[13px]">
          <svg viewBox="0 0 28 32" className="h-8 w-7 shrink-0" aria-hidden="true"><path d="M1 1h26v15c0 8-6 13-13 15C7 29 1 24 1 16z" fill="#fff" stroke="#777" /><path d="M2 10l6-3 2 2V4l4 2 4-2v5l2-2 6 3c0 10-2 12-5 16l-3-13-1 11-3-11-3 11-1-11-3 13c-3-4-5-7-5-16z" fill="#1c1c1c" /><path d="M8 26c3-3 9-3 12 0l-6 5z" fill="#b22d2d" /></svg>
          <div className="ml-[7px] border-l border-[#c9302c] py-1 pl-[7px] whitespace-nowrap text-[#333]">
            <p className="text-[9px] leading-3">University of</p><p className="text-[15px] leading-4 font-bold text-black">Salford</p><p className="text-[8px] leading-3 text-[#c9302c]">MANCHESTER</p>
          </div>
        </div>
        <h1 className="ml-[107px] text-[49px] leading-[46px] font-bold whitespace-nowrap text-[#e66c1a]">Income By Area - 2020</h1>
      </div>
      <div className="flex gap-[106px] pl-[229px]">
        <Slicer label="Region" id="region" />
        <Slicer label="LocalAuthority" id="authority" />
      </div>
      <div className="mt-[89px] mr-[30px] grid grid-cols-3 items-stretch gap-2">
        <IncomeChart />
        <MapVisual />
        <CategoryChart />
      </div>
    </div>
    <div className="flex w-[188px] shrink-0 flex-col gap-8 pt-[136px]">
      {cards.map(([v, l]) => (
        <div key={l} className="flex h-[95px] flex-col items-center bg-[#bfd4ec] pt-5">
          <p className="font-[Roboto] text-[33px] leading-9 font-bold text-[#e66c1a]">{v}</p>
          <p className="pt-px text-[18px] leading-9 font-bold text-black">{l}</p>
        </div>
      ))}
    </div>
  </section>
);

const PageTabs = () => (
  <div className="flex h-[67px] bg-[#f3f2f1] text-[22px] text-[#252423]">
    <button aria-label="Desktop layout" className="ml-[18px] flex w-[46px] flex-col items-center">
      <svg viewBox="0 0 36 28" className="mt-[14px] h-7 w-9" fill="none" stroke="#555" strokeWidth="2"><path d="M1 1h34v20H1zM18 21v6M11 27h14" /></svg>
      <span className="mt-[11px] h-[5px] w-full rounded-full bg-[#117865]" />
    </button>
    <button aria-label="Mobile layout" className="ml-12 self-start pt-2"><svg viewBox="0 0 26 40" className="h-10 w-[26px]" fill="none" stroke="#555" strokeWidth="2"><rect x="1" y="1" width="24" height="38" rx="2" /><path d="M11 33h4" /></svg></button>
    <button aria-label="Previous page" className="ml-[37px]"><svg viewBox="0 0 9 16" className="h-4 w-[9px]"><path d="M9 0v16L0 8z" fill="#c8c6c4" /></svg></button>
    <button aria-label="Next page" className="mr-[15px] ml-[33px]"><svg viewBox="0 0 9 16" className="h-4 w-[9px]"><path d="M0 0v16l9-8z" fill="#c8c6c4" /></svg></button>
    <div className="relative h-[65px] w-[143px] border-b-6 border-l border-b-[#117865] border-l-[#999] bg-white">
      <button className="size-full pt-2 font-semibold">Page 1</button>
      <button aria-label="Delete page" className="absolute top-1 right-[9px] text-lg leading-6 font-semibold">x</button>
    </div>
    <button className="h-[65px] w-[143px] border-l border-[#c8c6c4] bg-white pt-0.5">Page 2</button>
    <button className="h-[65px] w-[144px] border-l border-[#c8c6c4] bg-white pt-0.5">Page 3</button>
    <button aria-label="New page" className="flex w-[75px] items-center justify-center bg-[#117865]"><svg viewBox="0 0 22 22" className="size-[22px]" stroke="#fff" strokeWidth="5"><path d="M0 11h22M11 0v22" /></svg></button>
  </div>
);

const VisualizationsPane = () => (
  <aside className="flex w-[342px] shrink-0 flex-col border-r border-l border-[#dcdad8] bg-[#f3f2f1] text-[#252423]">
    <div className="flex h-[75px] items-center justify-between pr-[14px] pl-[15px]">
      <h2 className="text-[28px] font-semibold">Visualizations</h2>
      <button aria-label="Collapse visualizations"><DoubleChevron /></button>
    </div>
    <h3 className="pl-[15px] text-[21px] leading-6 font-semibold">Build visual</h3>
    <div className="mt-[10px] flex items-center gap-[72px] pl-[15px]">
      <button aria-label="Build visual" className="flex size-[60px] items-center justify-center rounded-md bg-[#d2d0ce]">
        <svg viewBox="0 0 46 46" className="size-[46px]"><path d="M0 1h37" stroke="#222" strokeWidth="2" /><path d="M2 12h42v12H2zM2 32h42v12H2z" fill="#117865" stroke="#222" strokeWidth="3" strokeDasharray="4 2" /></svg>
      </button>
      <button aria-label="Format visual"><svg viewBox="0 0 46 48" className="h-12 w-[46px]" fill="none" stroke="#222" strokeWidth="2"><path d="M8 46H1V1h19l13 14v5M20 1v14h13M44 17c-3 0-14 12-17 18l4 4c5-4 14-18 13-22zM27 35c-8 0-6 8-16 9 6 5 20 3 20-5" /></svg></button>
    </div>
    <div className="mt-2 flex">
      <span className="h-[17px] w-[30px] border-b-2 border-[#8a8886]" />
      <svg viewBox="0 0 32 17" className="h-[17px] w-8" fill="none" stroke="#8a8886" strokeWidth="2" aria-hidden="true"><path d="M0 16L16 1l16 15" /></svg>
      <span className="h-[17px] flex-1 border-b-2 border-[#8a8886]" />
    </div>
    <div className="mt-5 grid grid-cols-6 gap-y-[19px] pl-[21px]">
      {visuals.map((v) => (
        <button key={v.name} aria-label={v.name} className="size-[34px]">
          <svg viewBox="0 0 34 34" className="size-[34px] overflow-visible">{v.art}</svg>
        </button>
      ))}
    </div>
    <div className="mt-[17px] flex flex-1 border-t border-[#dcdad8]">
      <div className="flex-1 pl-[7px]">
        <p className="pt-[15px] pl-[14px] text-[21px] leading-8">Values</p>
        <div className="mt-2 flex h-[54px] items-center rounded border border-dashed border-[#b3b0ad] bg-white pl-[19px] text-[21px]">Add data fields here</div>
      </div>
      <div className="mt-[3px] h-[46px] w-3 rounded-full bg-[#8a8886]" />
    </div>
  </aside>
);

const DataPane = () => (
  <aside className="w-[339px] shrink-0 bg-[#f3f2f1] px-[7px] text-[#252423]">
    <div className="flex h-[75px] items-center justify-between pr-1.5 pl-2">
      <h2 className="text-[28px] font-semibold">Data</h2>
      <button aria-label="Collapse data"><DoubleChevron /></button>
    </div>
    <label className="mt-[11px] flex h-[46px] items-center rounded-md border border-[#d1d1d1] border-b-[#616161] bg-white pl-[22px]">
      <svg viewBox="0 0 28 28" className="size-7 shrink-0" fill="none" stroke="#555" strokeWidth="2" aria-hidden="true"><circle cx="12" cy="11" r="10" /><path d="M19 18l8 8" /></svg>
      <input aria-label="Search fields" placeholder="Search" className="ml-3 w-full min-w-0 bg-transparent text-[23px] outline-none placeholder:text-[#707070]" />
    </label>
    <ul className="mt-[18px]">
      {["Sheet1", "Table1"].map((t) => (
        <li key={t}>
          <button className="flex h-[45px] items-center pl-[22px] text-[21px]">
            <svg viewBox="0 0 12 22" className="h-[22px] w-3" fill="none" stroke="#333" strokeWidth="2" aria-hidden="true"><path d="M1 1l10 10L1 21" /></svg>
            <svg viewBox="0 0 24 24" className="mr-[11px] ml-3 size-6" fill="none" stroke="#222" strokeWidth="2" aria-hidden="true"><rect x="1" y="1" width="22" height="22" rx="5" /><path d="M1 8h22M1 16h22M8 1v22M16 1v22" /></svg>
            {t}
          </button>
        </li>
      ))}
    </ul>
  </aside>
);

const StatusBar = () => (
  <footer className="flex h-11 items-center border-t-2 border-[#dedcda] bg-[#f3f2f1] pr-[33px] pl-2 text-[22px] text-[#484644]">
    <span>Page 1 of 3</span>
    <button aria-label="Zoom out" className="mr-2.5 ml-auto h-[3px] w-2 bg-[#555]" />
    <div className="relative flex w-[190px] items-center">
      <span className="absolute left-[95px] h-[10px] w-0.5 bg-[#605e5c]" />
      <input type="range" aria-label="Zoom" min={10} max={200} defaultValue={46} className="relative h-5 w-full appearance-none bg-transparent [&::-webkit-slider-runnable-track]:h-0.5 [&::-webkit-slider-runnable-track]:bg-[#605e5c] [&::-webkit-slider-thumb]:-mt-[9px] [&::-webkit-slider-thumb]:h-5 [&::-webkit-slider-thumb]:w-2 [&::-webkit-slider-thumb]:appearance-none [&::-webkit-slider-thumb]:bg-[#605e5c]" />
    </div>
    <button aria-label="Zoom in" className="ml-[10px]"><svg viewBox="0 0 14 14" className="size-[14px]" stroke="#555" strokeWidth="3"><path d="M0 7h14M7 0v14" /></svg></button>
    <span className="ml-[25px] text-[22px] text-[#605e5c]">46%</span>
    <button aria-label="Fit to page" className="ml-9"><svg viewBox="0 0 30 22" className="h-[22px] w-[30px]" fill="none" stroke="#605e5c" strokeWidth="2"><path d="M1 1h28v20H1zM5 8V5h4M21 5h4v3M25 14v3h-4M9 17H5v-3" /></svg></button>
  </footer>
);

const apps: { name: string; art: React.ReactNode; dot?: boolean; active?: boolean }[] = [
  { name: "Task view", art: <><rect x="3" y="6" width="14" height="16" rx="1" fill="#222" /><rect x="8" y="2" width="16" height="14" rx="1" fill="#e4e4e4" /><path d="M8 6h9v10H8z" fill="#aaa" /></> },
  { name: "Visual Studio Code", art: <><path d="M17 0l7 3v18l-7 3L5 12z" fill="#1b8fdc" /><path d="M17 6v12l-8-6z" fill="#f0eedd" /><path d="M0 8l3-2 15 12-1 6zM0 16l3 2L18 6l-1-6z" fill="#0a6fb8" /><path d="M17 0l7 3v18l-7 3z" fill="#2aa3ef" /></> },
  { name: "File Explorer", art: <><path d="M0 2h9l3 3h12v18H0z" fill="#e0a21b" /><path d="M0 7h24v16H0z" fill="#ffcc43" /><path d="M4 23v-5q0-3 3-3h10q3 0 3 3v5z" fill="#1672c4" /></>, dot: true },
  { name: "Copilot", art: <foreignObject width="24" height="24"><CopilotMark className="w-6" /></foreignObject> },
  { name: "Edge", art: <><circle cx="12" cy="12" r="12" fill="#1378c8" /><path d="M0 11C1 4 6 0 12 0c8 0 12 6 12 11s-4 6-7 6-4-2-3-4-1-5-4-5c-5 0-8 1-10 3z" fill="#3cc3a8" /><path d="M0 11C1 4 6 0 12 0c3 0 5 1 7 2C10 1 3 5 0 11z" fill="#2aa5dc" /><path d="M9 11c-2 6 3 11 12 9-4 5-12 5-16 0-3-5 0-9 4-9z" fill="#0b4f94" /></> },
  { name: "Microsoft 365 Copilot", art: <><foreignObject width="24" height="24"><CopilotMark className="w-6" /></foreignObject><rect x="5" y="17" width="19" height="7" fill="#111" /><text x="14" y="23" textAnchor="middle" fontSize="7" fontWeight="700" fill="#fff">M365</text></> },
  { name: "PyCharm", art: <><path d="M6 2l18-2v16l-7 8H0V10z" fill="#12c9e0" /><path d="M10 0h14v14L14 8z" fill="#e6ee36" /><path d="M18 8l6-2v10l-7 8-5-4z" fill="#21d789" /><path d="M5 4h15v15H5z" fill="#000" /><text x="12" y="12" textAnchor="middle" fontSize="8" fontWeight="700" fill="#fff">PC</text><path d="M7 16h6" stroke="#fff" /></> },
  { name: "Word", art: <><path d="M6 1h18v22H6z" fill="#2b7cd3" /><path d="M6 1h18v6H6z" fill="#41a5ee" /><path d="M6 17h18v6H6z" fill="#103f91" /><rect y="6" width="12" height="12" fill="#185abd" /><text x="6" y="15" textAnchor="middle" fontSize="9" fontWeight="700" fill="#fff">W</text></> },
  { name: "Microsoft Store", art: <><path d="M6 6V2h12v4" fill="none" stroke="#2aa9e8" strokeWidth="2" /><path d="M1 5h22v16q0 3-3 3H4q-3 0-3-3z" fill="#17477c" /><path d="M8 10h4v4H8z" fill="#f25022" /><path d="M13 10h4v4h-4z" fill="#7fba00" /><path d="M8 15h4v4H8z" fill="#00a4ef" /><path d="M13 15h4v4h-4z" fill="#ffb900" /></> },
  { name: "Chrome", art: <><circle cx="12" cy="12" r="12" fill="#fbbc05" /><path d="M12 12L2 6C8-3 20-1 23 7H12z" fill="#ea4335" /><path d="M2 6l8 12 2 6C2 24-3 14 2 6z" fill="#34a853" /><circle cx="12" cy="12" r="6" fill="#fff" /><circle cx="12" cy="12" r="4.5" fill="#4285f4" /></>, dot: true },
  { name: "Power BI Desktop", art: <><path d="M0 0h24v24H0z" fill="#0f7bd6" /><path d="M12 0h9v24h-9z" fill="#d9920e" /><path d="M7 6h8v18H7z" fill="#f2c430" /><path d="M2 12h8v12H2z" fill="#fadb6a" /></>, active: true },
  { name: "Photos", art: <><rect x="1" y="1" width="22" height="22" rx="3" fill="#2170c8" /><path d="M12 1h11v16z" fill="#5b50b0" /><path d="M1 20l8-9q2-2 4 0l10 10q-1 2-3 2H4q-3 0-3-3z" fill="#35c1f1" /><circle cx="17" cy="5" r="2" fill="#fff" /></>, dot: true },
];

const Taskbar = () => (
  <footer className="grid h-[49px] grid-cols-[1fr_auto_1fr] items-center border-t-2 border-black bg-[linear-gradient(90deg,#fbe8ea_0%,#fbeadb_20%,#f6efd0_30%,#dff1e4_37%,#f3eeda_43%,#ecebe0_55%,#e9ebdf_65%,#f7efcb_73%,#f0f2cd_85%,#eef0dc_100%)] text-[11px] leading-4 text-[#222]">
    <div className="flex items-center gap-1 pl-[18px]">
      <div className="relative">
        <svg viewBox="0 0 26 26" className="size-[26px]" aria-hidden="true"><path d="M5 18a5 5 0 0 1 1-9 8 8 0 0 1 15 1 5 5 0 0 1 0 8z" fill="#8fb7f2" /><path d="M18 13c4 6 4 8 4 9a4 4 0 0 1-7 0c0-2 2-5 3-9z" fill="#1d58d8" /></svg>
        <span className="absolute -top-1 left-3 flex size-4 items-center justify-center rounded-full bg-[#c42b1c] text-[10px] text-white">4</span>
      </div>
      <div className="pl-0.5"><p>13°C</p><p className="text-[#555]">Light rain</p></div>
    </div>
    <div className="flex items-center pl-3">
      <button aria-label="Start"><svg viewBox="0 0 24 24" className="size-6"><path d="M0 0h11v11H0zM13 0h11v11H13zM0 13h11v11H0zM13 13h11v11H13z" fill="#1389de" /></svg></button>
      <label className="mr-[2px] ml-[13px] flex h-8 w-[218px] items-center rounded-full border border-[#e4dfd0] bg-[#fcfbf6] pl-[10px]">
        <svg viewBox="0 0 16 16" className="size-4 shrink-0" fill="none" stroke="#222" strokeWidth="2" aria-hidden="true"><circle cx="7" cy="6" r="5" /><path d="M11 10l4 5" /></svg>
        <input aria-label="Search Windows" placeholder="Search" className="ml-[10px] w-full min-w-0 bg-transparent text-[22px] outline-none placeholder:text-[#5a5a58]" />
      </label>
      {apps.map((a) => (
        <button key={a.name} aria-label={a.name} className={"relative mx-[3px] flex h-[38px] w-[38px] items-center justify-center rounded " + (a.active ? "bg-[#fbf9ea]" : "")}>
          <svg viewBox="0 0 24 24" className="size-6">{a.art}</svg>
          {a.dot && <span className="absolute bottom-0 h-[3px] w-1.5 rounded-full bg-[#8b897c]" />}
          {a.active && <span className="absolute bottom-0 h-[3px] w-4 rounded-full bg-[#0f7bd6]" />}
        </button>
      ))}
    </div>
    <div className="flex items-center justify-end pr-[19px]">
      <Chevron className="mr-5 w-3 rotate-180" />
      <svg viewBox="0 0 64 16" className="mr-4 h-4 w-16" fill="none" stroke="#222" aria-hidden="true"><path d="M1 6c4-5 10-5 14 0M3 9c3-4 7-4 10 0M6 12c1-2 3-2 4 0M8 14v-1" strokeWidth="1.5" /><path d="M25 6h3l4-4v12l-4-4h-3zM35 5c2 2 2 4 0 6M37 3c3 3 3 7 0 10" /><path d="M48 6v7h13V4h-8M62 7v3" strokeWidth="2" /><path d="M52 7h7v4h-7zM50 0l-3 5h3l-1 4 4-6h-3z" fill="#222" stroke="none" /></svg>
      <div className="text-right text-xs leading-4"><p>16:45</p><p>19/10/2025</p></div>
    </div>
  </footer>
);

export default function App() {
  return (
    <div className="flex min-h-screen flex-col overflow-hidden bg-white font-['Open_Sans','Noto_Sans',sans-serif]">
      <TitleBar />
      <Ribbon />
      <div className="flex flex-1">
        <Rail />
        <main className="flex min-w-0 flex-1 flex-col">
          <div className="flex flex-1 items-start">
            <div className="min-w-0 flex-1"><Report /></div>
            <div className="relative flex w-[61px] shrink-0 flex-col items-center self-stretch bg-white pt-[23px] text-[#111]">
              <button aria-label="Expand filters"><DoubleChevron left /></button>
              <svg viewBox="0 0 24 24" className="mt-7 ml-2 size-6" fill="none" stroke="#111" strokeWidth="2" aria-hidden="true"><path d="M22 1v22L11 15H3V9h8z" /></svg>
              <span className="mt-4 text-[25px] leading-6 font-semibold [writing-mode:vertical-rl]">Filters</span>
            </div>
          </div>
          <PageTabs />
        </main>
        <VisualizationsPane />
        <DataPane />
      </div>
      <StatusBar />
      <Taskbar />
    </div>
  );
}
